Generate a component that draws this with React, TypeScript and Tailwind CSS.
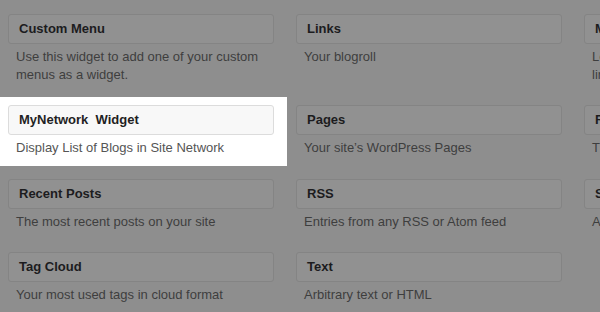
import React from "react";

type W = { title: string; desc: string; hi?: boolean };

const widgets: W[] = [
  { title: "Custom Menu", desc: "Use this widget to add one of your custom menus as a widget." },
  { title: "Links", desc: "Your blogroll" },
  { title: "Meta", desc: "Log in/out, admin, feed and WordPress links" },
  { title: "MyNetwork  Widget", desc: "Display List of Blogs in Site Network", hi: true },
  { title: "Pages", desc: "Your site\u2019s WordPress Pages" },
  { title: "Recent Comments", desc: "The most recent comments" },
  { title: "Recent Posts", desc: "The most recent posts on your site" },
  { title: "RSS", desc: "Entries from any RSS or Atom feed" },
  { title: "Search", desc: "A search form for your site" },
  { title: "Tag Cloud", desc: "Your most used tags in cloud format" },
  { title: "Text", desc: "Arbitrary text or HTML" },
];

function Widget({ w }: { w: W }) {
  if (w.hi) {
    return (
      <div className="relative">
        <div className="absolute left-[-8px] top-[-8px] w-[287px] h-[69px] bg-white" />
        <div className="relative">
          <div className="h-[30px] rounded-[3px] border border-[#dcdcdc] bg-[#f8f8f8] flex items-center pl-[10px] text-[13px] font-bold text-[#1f1f23] whitespace-pre">
            {w.title}
          </div>
          <div className="mt-[4px] px-[8px] text-[13px] leading-[17.5px] text-[#555555]">{w.desc}</div>
        </div>
      </div>
    );
  }
  return (
    <div>
      <div className="h-[30px] rounded-[3px] border border-[#848484] bg-[#919191] flex items-center pl-[10px] text-[13px] font-bold text-[#1c1c1e] whitespace-pre">
        {w.title}
      </div>
      <div className="mt-[4px] px-[8px] text-[13px] leading-[17.5px] text-[#3e3e3e]">{w.desc}</div>
    </div>
  );
}

export default function App() {
  return (
    <div
      className="w-[600px] h-[312px] overflow-hidden bg-[#8e8e8e]"
      style={{ fontFamily: '"Liberation Sans", Arial, sans-serif' }}
    >
      <div className="grid grid-cols-[266px_266px_266px] gap-x-[22px] gap-y-[22px] pl-[8px] pt-[14px] w-[900px]">
        {widgets.map((w, i) => (
          <Widget key={i} w={w} />
        ))}
      </div>
    </div>
  );
}
